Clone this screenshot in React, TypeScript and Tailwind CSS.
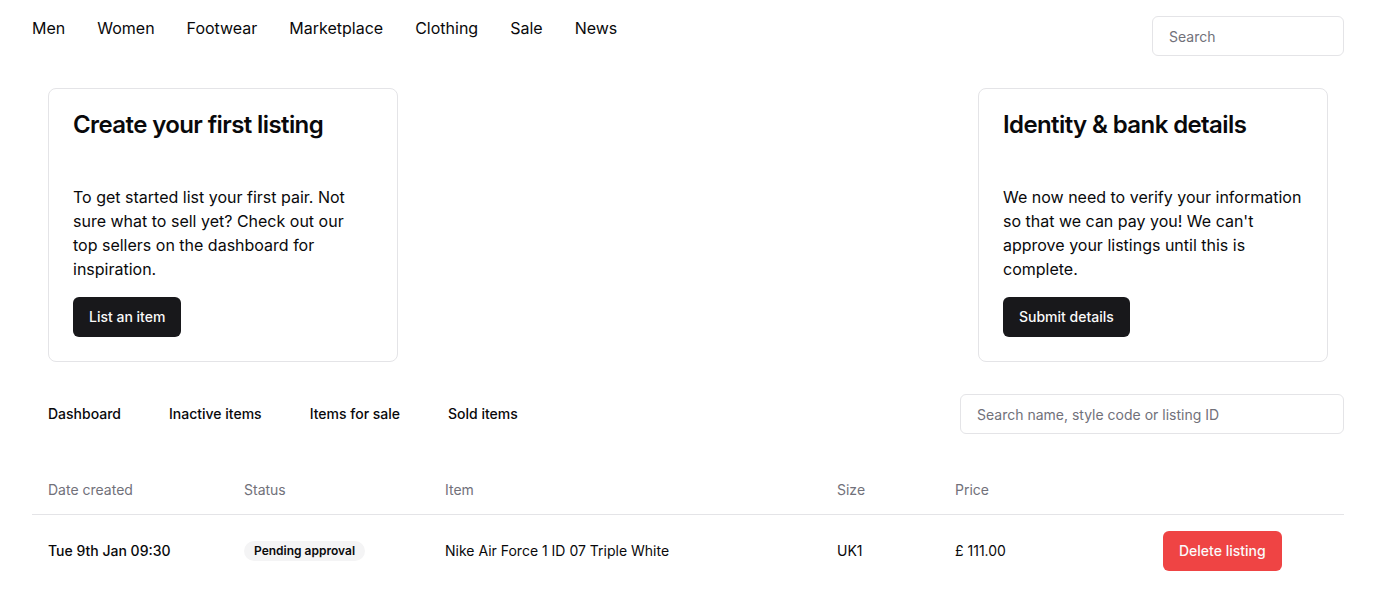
import React from "react";

const font = { fontFamily: "Inter, 'Noto Sans', sans-serif" };

function Card({ title, body, action, narrow }: { title: string; body: string; action: string; narrow?: boolean }) {
  return (
    <div className="w-[350px] h-[274px] rounded-lg border border-[#e4e4e7] bg-white p-6 flex flex-col">
      <h2 className="text-2xl leading-6 font-semibold text-[#09090b] tracking-tight">{title}</h2>
      <p className={narrow ? "mt-12 max-w-[296px] text-base leading-6 text-[#09090b]" : "mt-12 text-base leading-6 text-[#09090b]"}>{body}</p>
      <div className="mt-4">
        <button className="h-10 rounded-md bg-[#18181b] px-4 text-sm font-medium text-[#fafafa]">{action}</button>
      </div>
    </div>
  );
}

export default function App() {
  const nav = ["Men", "Women", "Footwear", "Marketplace", "Clothing", "Sale", "News"];
  const tabs = ["Dashboard", "Inactive items", "Items for sale", "Sold items"];
  return (
    <div style={font} className="min-h-screen bg-white text-[#09090b]">
      <header className="flex items-start justify-between px-8 pt-4">
        <nav className="flex gap-8">
          {nav.map((n) => (
            <a key={n} className="text-base leading-6 text-[#09090b]">{n}</a>
          ))}
        </nav>
        <input
          placeholder="Search"
          className="h-10 w-[192px] rounded-md border border-[#e4e4e7] px-4 text-sm placeholder:text-[#71717a] outline-none"
        />
      </header>

      <section className="mt-8 flex justify-between px-12">
        <Card
          narrow
          title="Create your first listing"
          body="To get started list your first pair. Not sure what to sell yet? Check out our top sellers on the dashboard for inspiration."
          action="List an item"
        />
        <Card
          title="Identity & bank details"
          body="We now need to verify your information so that we can pay you! We can't approve your listings until this is complete."
          action="Submit details"
        />
      </section>

      <section className="mt-8 flex items-center justify-between px-8">
        <div className="ml-4 flex gap-12">
          {tabs.map((t) => (
            <button key={t} className="text-sm font-medium leading-5 text-[#09090b]">{t}</button>
          ))}
        </div>
        <input
          placeholder="Search name, style code or listing ID"
          className="h-10 w-[384px] rounded-md border border-[#e4e4e7] px-4 text-sm placeholder:text-[#71717a] outline-none"
        />
      </section>

      <div className="mt-8 px-8">
        <table className="w-full table-fixed text-sm">
          <thead>
            <tr className="border-b border-[#e4e4e7] h-12">
              <th className="w-[196px] px-4 text-left font-normal text-[#71717a]">Date created</th>
              <th className="w-[201px] px-4 text-left font-normal text-[#71717a]">Status</th>
              <th className="w-[392px] px-4 text-left font-normal text-[#71717a]">Item</th>
              <th className="w-[118px] px-4 text-left font-normal text-[#71717a]">Size</th>
              <th className="w-[208px] px-4 text-left font-normal text-[#71717a]">Price</th>
              <th className="px-4"></th>
            </tr>
          </thead>
          <tbody>
            <tr>
              <td className="px-4 py-4 font-medium">Tue 9th Jan 09:30</td>
              <td className="px-4 py-4">
                <span className="inline-flex items-center rounded-full bg-[#f4f4f5] px-2.5 py-0.5 text-xs font-semibold">
                  Pending approval
                </span>
              </td>
              <td className="px-4 py-4">Nike Air Force 1 ID 07 Triple White</td>
              <td className="px-4 py-4">UK1</td>
              <td className="px-4 py-4">£ 111.00</td>
              <td className="px-4 py-4">
                <button className="h-10 rounded-md bg-[#ef4444] px-4 text-sm font-medium text-[#fafafa]">Delete listing</button>
              </td>
            </tr>
          </tbody>
        </table>
      </div>
    </div>
  );
}
